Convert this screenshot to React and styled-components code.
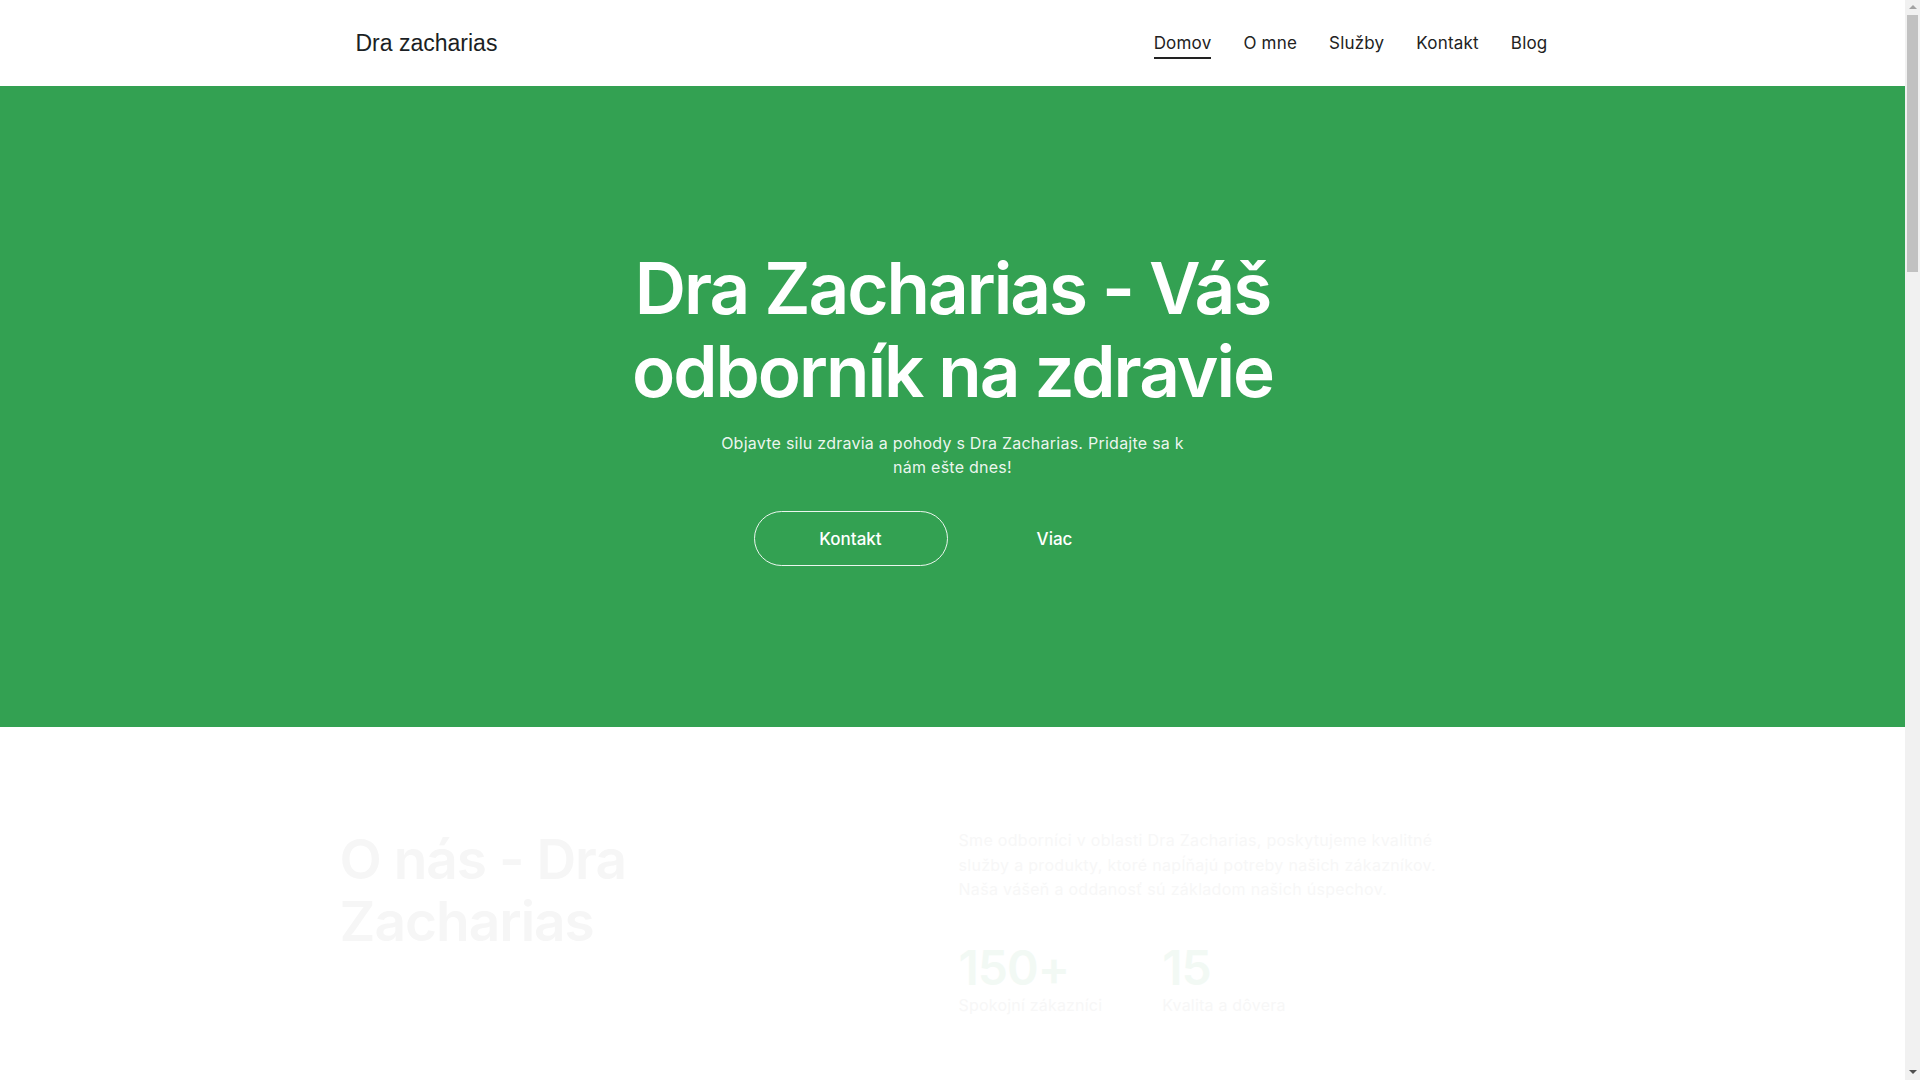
import React from "react";
import styled, { createGlobalStyle } from "styled-components";

const GlobalStyle = createGlobalStyle`
  * { box-sizing: border-box; }
  html, body { margin: 0; padding: 0; }
  body {
    font-family: Inter, "Open Sans", sans-serif;
    color: #1c1c1c;
    background: #ffffff;
  }
`;

const Page = styled.div`
  margin-right: 15px;
`;

/* stand-in for the browser scrollbar seen in the screenshot */
const ScrollTrack = styled.div`
  position: fixed;
  top: 0;
  right: 0;
  bottom: 0;
  width: 15px;
  background: #f1f1f1;
  display: flex;
  flex-direction: column;
  align-items: center;
`;

const ScrollArrow = styled.div`
  width: 0;
  height: 0;
  border-left: 4px solid transparent;
  border-right: 4px solid transparent;
  ${(p) =>
    p.$down
      ? "border-top: 4px solid #505050; margin-top: auto; margin-bottom: 6px;"
      : "border-bottom: 4px solid #a3a3a3; margin-top: 5px;"}
`;

const ScrollThumb = styled.div`
  width: 11px;
  height: 257px;
  margin-top: 6px;
  background: #c1c1c1;
`;

const Header = styled.header`
  height: 86px;
  background: #ffffff;
`;

const HeaderInner = styled.div`
  max-width: 1200px;
  height: 100%;
  margin: 0 auto;
  display: flex;
  align-items: center;
  justify-content: space-between;
`;

const Logo = styled.a`
  font-family: "Liberation Sans", Arial, sans-serif;
  font-size: 23px;
  color: #1b1f24;
  text-decoration: none;
  padding-left: 3px;
  padding-top: 1px;
`;

const Nav = styled.nav`
  display: flex;
  gap: 32px;
  padding-right: 5px;
`;

const NavLink = styled.a`
  font-size: 17px;
  letter-spacing: 0.2px;
  color: #222;
  text-decoration: none;
  padding: 6px 0 4px;
  border-bottom: 2px solid ${(p) => (p.$active ? "#222" : "transparent")};
`;

const Hero = styled.section`
  height: 641px;
  background: #33a152;
  display: flex;
  flex-direction: column;
  align-items: center;
  justify-content: center;
  text-align: center;
  color: #ffffff;
`;

const HeroTitle = styled.h1`
  margin: 0;
  font-size: 71px;
  font-weight: 600;
  line-height: 83px;
  letter-spacing: -2px;
  max-width: 720px;
`;

const HeroText = styled.p`
  margin: 18px 0 0;
  font-size: 16px;
  line-height: 24px;
  letter-spacing: 0.25px;
  max-width: 480px;
  color: rgba(255, 255, 255, 0.92);
`;

const Buttons = styled.div`
  display: flex;
  gap: 10px;
  margin-top: 32px;
`;

const Button = styled.a`
  width: 194px;
  height: 55px;
  display: flex;
  align-items: center;
  justify-content: center;
  border-radius: 28px;
  border: 1px solid ${(p) => (p.$outline ? "rgba(255,255,255,0.9)" : "transparent")};
  color: #ffffff;
  font-size: 17px;
  font-weight: 500;
  text-decoration: none;
`;

const About = styled.section`
  padding: 101px 0 140px;
`;

const AboutInner = styled.div`
  max-width: 1226px;
  margin: 0 auto;
  display: grid;
  grid-template-columns: 1fr 1fr;
`;

const AboutTitle = styled.h2`
  margin: 0;
  font-size: 55px;
  font-weight: 600;
  line-height: 62px;
  letter-spacing: -1px;
  color: #f6f6f6;
  max-width: 420px;
`;

const AboutRight = styled.div`
  padding-left: 6px;
`;

const AboutText = styled.p`
  margin: 0;
  font-size: 16px;
  line-height: 24.5px;
  letter-spacing: 0.3px;
  color: #f7f7f7;
  max-width: 490px;
`;

const Stats = styled.div`
  display: flex;
  gap: 60px;
  margin-top: 40px;
`;

const Stat = styled.div`
  display: flex;
  flex-direction: column;
`;

const StatNumber = styled.span`
  font-size: 48px;
  font-weight: 600;
  line-height: 52px;
  letter-spacing: -1px;
  color: #f2f9f4;
`;

const StatLabel = styled.span`
  font-size: 16px;
  line-height: 22px;
  letter-spacing: 0.2px;
  color: #f7f7f7;
`;

const Faded = styled.section`
  max-width: 1226px;
  margin: 0 auto;
  padding: 100px 0;
  display: grid;
  grid-template-columns: repeat(3, 1fr);
  gap: 24px;
`;

const FadedCard = styled.div`
  height: 420px;
  border-radius: 16px;
  background: #fbfbfb;
`;

export default function App() {
  return (
    <>
      <GlobalStyle />
      <Page>
        <Header>
          <HeaderInner>
            <Logo href="#">Dra zacharias</Logo>
            <Nav>
              <NavLink href="#" $active>Domov</NavLink>
              <NavLink href="#">O mne</NavLink>
              <NavLink href="#">Služby</NavLink>
              <NavLink href="#">Kontakt</NavLink>
              <NavLink href="#">Blog</NavLink>
            </Nav>
          </HeaderInner>
        </Header>

        <Hero>
          <HeroTitle>Dra Zacharias - Váš odborník na zdravie</HeroTitle>
          <HeroText>
            Objavte silu zdravia a pohody s Dra Zacharias. Pridajte sa k nám ešte dnes!
          </HeroText>
          <Buttons>
            <Button href="#" $outline>Kontakt</Button>
            <Button href="#">Viac</Button>
          </Buttons>
        </Hero>

        <About>
          <AboutInner>
            <AboutTitle>O nás - Dra Zacharias</AboutTitle>
            <AboutRight>
              <AboutText>
                Sme odborníci v oblasti Dra Zacharias, poskytujeme kvalitné služby a produkty,
                ktoré napĺňajú potreby našich zákazníkov. Naša vášeň a oddanosť sú základom
                našich úspechov.
              </AboutText>
              <Stats>
                <Stat>
                  <StatNumber>150+</StatNumber>
                  <StatLabel>Spokojní zákazníci</StatLabel>
                </Stat>
                <Stat>
                  <StatNumber>15</StatNumber>
                  <StatLabel>Kvalita a dôvera</StatLabel>
                </Stat>
              </Stats>
            </AboutRight>
          </AboutInner>
        </About>

        <Faded>
          <FadedCard />
          <FadedCard />
          <FadedCard />
        </Faded>
        <Faded>
          <FadedCard />
          <FadedCard />
          <FadedCard />
        </Faded>
        <Faded>
          <FadedCard />
          <FadedCard />
          <FadedCard />
        </Faded>
      </Page>
      <ScrollTrack>
        <ScrollArrow />
        <ScrollThumb />
        <ScrollArrow $down />
      </ScrollTrack>
    </>
  );
}
